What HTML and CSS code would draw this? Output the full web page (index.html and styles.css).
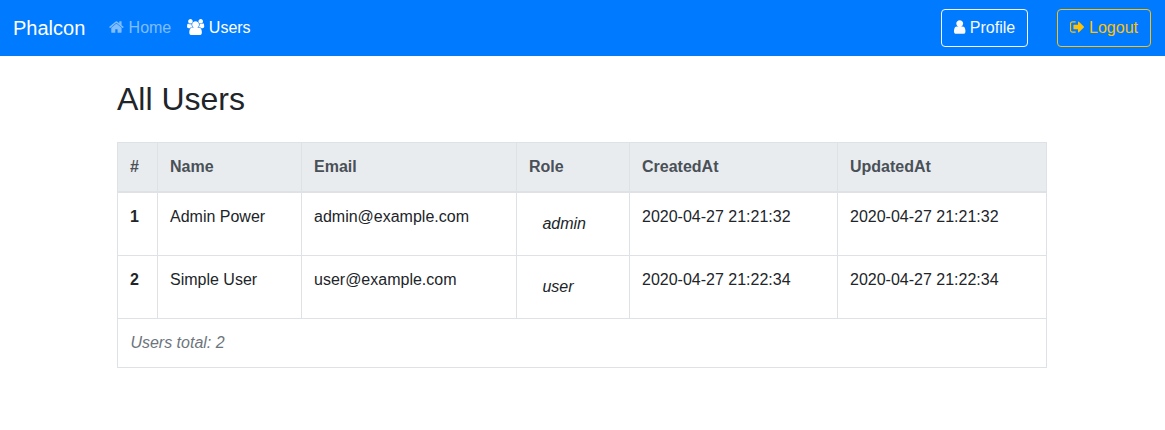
FILE: index.html
```html
<!DOCTYPE html>
<html lang="en">
<head>
<meta charset="utf-8">
<title>All Users</title>
<link rel="stylesheet" href="styles.css">
</head>
<body>
<nav class="navbar">
  <a class="brand">Phalcon</a>
  <div class="nav">
    <a class="nav-link"><svg class="icon icon-home" viewBox="64 0 1664 1792"><path d="M1472 992v480q0 26-19 45t-45 19h-384v-384h-256v384h-384q-26 0-45-19t-19-45v-480q0-1 .5-3t.5-3l575-474 575 474q1 2 1 6zm223-69l-62 74q-8 9-21 11h-3q-13 0-21-7l-692-577-692 577q-12 8-24 7-13-2-21-11l-62-74q-8-10-7-23.5t11-21.5l719-599q32-26 76-26t76 26l244 204v-195q0-14 9-23t23-9h192q14 0 23 9t9 23v408l219 182q10 8 11 21.5t-7 23.5z"/></svg> Home</a>
    <a class="nav-link active"><svg class="icon icon-users" viewBox="0 0 1920 1792"><path d="M593 896q-162 5-265 128h-134q-82 0-138-40.500t-56-118.500q0-353 124-353 6 0 43.500 21t97.500 42.500 119 21.500q67 0 133-23-5 37-5 66 0 159 93 293zm1071 637q0 120-73 189.500t-194 69.500h-874q-121 0-194-69.500t-73-189.500q0-53 3.500-103.500t14-109 26.500-108.500 43-97.500 62-81 85.500-53.500 111.500-20q10 0 43 10t73 22 107 22 135 10 135-10 107-22 73-22 43-10q61 0 111.500 20t85.500 53.500 62 81 43 97.500 26.500 108.500 14 109 3.500 103.500zm-1024-1277q0 106-75 181t-181 75-181-75-75-181 75-181 181-75 181 75 75 181zm704 384q0 159-112.500 271.500t-271.500 112.500-271.500-112.500-112.500-271.500 112.500-271.500 271.500-112.500 271.500 112.500 112.500 271.500zm576 225q0 78-56 118.500t-138 40.500h-134q-103-123-265-128 93-134 93-293 0-29-5-66 66 23 133 23 59 0 119-21.500t97.500-42.500 43.500-21q124 0 124 353zm-128-609q0 106-75 181t-181 75-181-75-75-181 75-181 181-75 181 75 75 181z"/></svg> Users</a>
  </div>
  <div class="actions">
    <a class="btn btn-light"><svg class="icon icon-user" viewBox="256 0 1280 1792"><path d="M1536 1399q0 109-62.500 187t-150.500 78h-854q-88 0-150.500-78t-62.500-187q0-85 8.500-160.500t31.500-152 58.500-131 94-89 134.500-34.500q131 40 313 40t313-40q76 0 134.500 34.500t94 89 58.500 131 31.500 152 8.500 160.500zm-256-887q0 159-112.500 271.500t-271.500 112.500-271.500-112.500-112.500-271.500 112.500-271.500 271.500-112.500 271.500 112.500 112.500 271.500z"/></svg> Profile</a>
    <a class="btn btn-warning"><svg class="icon icon-logout" viewBox="64 0 1664 1792"><path d="M704 1440q0 4 1 20t.5 26.500-3 23.500-10 19.500-20.500 6.500h-320q-119 0-203.500-84.500t-84.500-203.500v-704q0-119 84.500-203.500t203.500-84.500h320q13 0 22.500 9.500t9.500 22.500q0 4 1 20t.5 26.500-3 23.500-10 19.500-20.500 6.500h-320q-66 0-113 47t-47 113v704q0 66 47 113t113 47h312l11.500 1 11.500 3 8 5.500 7 9 2 13.500zm928-544q0 26-19 45l-544 544q-19 19-45 19t-45-19-19-45v-288h-448q-26 0-45-19t-19-45v-384q0-26 19-45t45-19h448v-288q0-26 19-45t45-19 45 19l544 544q19 19 19 45z"/></svg> Logout</a>
  </div>
</nav>
<main class="content">
  <h1 class="title">All Users</h1>
  <table class="table">
    <colgroup><col class="col-id"><col class="col-name"><col class="col-email"><col class="col-role"><col class="col-date"><col></colgroup>
    <thead>
      <tr><th>#</th><th>Name</th><th>Email</th><th>Role</th><th>CreatedAt</th><th>UpdatedAt</th></tr>
    </thead>
    <tbody>
      <tr><th>1</th><td>Admin Power</td><td>admin@example.com</td><td><em class="role">admin</em></td><td>2020-04-27 21:21:32</td><td>2020-04-27 21:21:32</td></tr>
      <tr><th>2</th><td>Simple User</td><td>user@example.com</td><td><em class="role">user</em></td><td>2020-04-27 21:22:34</td><td>2020-04-27 21:22:34</td></tr>
      <tr><td colspan="6"><em class="total">Users total: 2</em></td></tr>
    </tbody>
  </table>
</main>
</body>
</html>
```
FILE: styles.css
```css
* { box-sizing: border-box; }

body {
  margin: 0;
  background: #fff;
  color: #212529;
  font: 16px/24px "Liberation Sans", Arial, sans-serif;
}

.navbar {
  display: flex;
  align-items: center;
  height: 56px;
  padding: 0 14px 0 13px;
  background: #007bff;
  color: #fff;
}

.brand {
  margin-right: 16px;
  font-size: 20px;
  line-height: 30px;
}

.nav { display: flex; }

.nav-link {
  padding: 8px;
  color: rgba(255, 255, 255, .5);
}

.nav-link.active { color: #fff; }

.icon {
  height: 16px;
  fill: currentColor;
  overflow: visible;
  vertical-align: -2.286px;
}

.icon-home, .icon-logout { width: 14.857px; }
.icon-users { width: 17.143px; }
.icon-user { width: 11.429px; }

.actions {
  display: flex;
  gap: 28.6px;
  margin-left: auto;
}

.btn {
  padding: 6px 12px;
  border: 1px solid;
  border-radius: 4px;
}

.btn-light { color: #f8f9fa; }
.btn-warning { color: #ffc107; }

.content {
  width: 930px;
  margin-left: 117px;
  padding-top: 24px;
}

.title {
  margin: 0 0 24px;
  font-size: 32px;
  font-weight: 500;
  line-height: 38px;
}

.table {
  width: 930px;
  table-layout: fixed;
  border-collapse: collapse;
}

.col-id { width: 40px; }
.col-name { width: 144px; }
.col-email { width: 215px; }
.col-role { width: 113px; }
.col-date { width: 208px; }

.table th, .table td {
  padding: 12px;
  border: 1px solid #dee2e6;
  text-align: left;
  vertical-align: top;
}

.table thead th {
  border-bottom-width: 2px;
  background: #e9ecef;
  color: #495057;
}

.role {
  display: block;
  padding: 7px 13.4px;
}

.total {
  padding-left: .4px;
  color: #6c757d;
}
```
